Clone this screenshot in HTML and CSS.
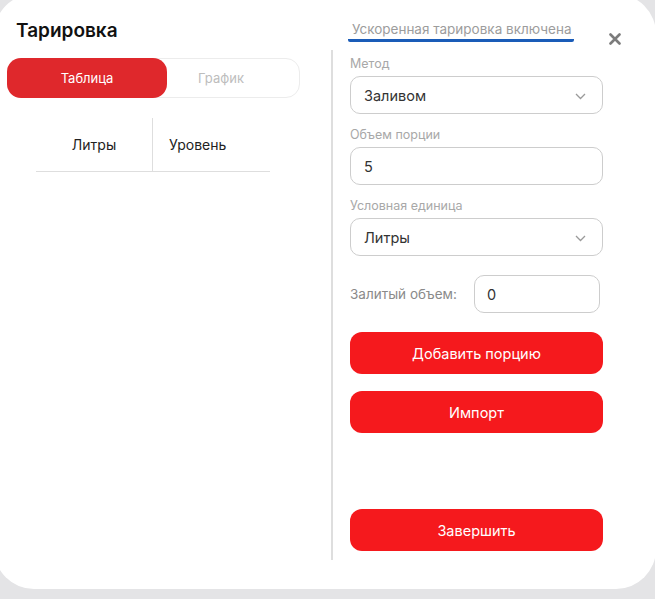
FILE: index.html
```html
<!DOCTYPE html>
<html lang="ru">
<head>
  <meta charset="UTF-8">
  <meta name="viewport" content="width=device-width, initial-scale=1.0">
  <title>Тарировка</title>
  <link rel="stylesheet" href="styles.css">
</head>
<body>
  <!-- Modal -->
  <div class="modal">
    <div class="modal-inner">

      <!-- Left: table / chart -->
      <section class="left-col">
        <h1 class="modal-title">Тарировка</h1>
        <div class="segment">
          <button class="segment-item active">Таблица</button>
          <button class="segment-item">График</button>
        </div>
        <div class="calib-table">
          <div class="calib-cell calib-cell-liters">Литры</div>
          <div class="calib-cell calib-cell-level">Уровень</div>
        </div>
      </section>

      <!-- Right: form -->
      <section class="right-col">
        <div class="right-head">
          <span class="fast-mode">Ускоренная тарировка включена</span>
          <button class="close-btn" aria-label="Закрыть">
            <svg width="12" height="12" viewBox="0 0 12 12">
              <path d="M1.5 1.5 L10.5 10.5 M10.5 1.5 L1.5 10.5" stroke="#7c7c7c" stroke-width="2.6" stroke-linecap="round"/>
            </svg>
          </button>
        </div>

        <div class="form">
          <div class="field-group">
            <label class="field-label">Метод</label>
            <div class="field select">
              <span>Заливом</span>
              <svg class="chevron" width="11" height="7" viewBox="0 0 11 7">
                <path d="M1 1 L5.5 5.5 L10 1" fill="none" stroke="#9a9a9a" stroke-width="1.3"/>
              </svg>
            </div>
          </div>

          <div class="field-group">
            <label class="field-label">Объем порции</label>
            <div class="field">
              <span>5</span>
            </div>
          </div>

          <div class="field-group">
            <label class="field-label">Условная единица</label>
            <div class="field select">
              <span>Литры</span>
              <svg class="chevron" width="11" height="7" viewBox="0 0 11 7">
                <path d="M1 1 L5.5 5.5 L10 1" fill="none" stroke="#9a9a9a" stroke-width="1.3"/>
              </svg>
            </div>
          </div>

          <div class="filled-row">
            <span class="filled-label">Залитый объем:</span>
            <div class="field field-small">
              <span>0</span>
            </div>
          </div>

          <button class="btn btn-add">Добавить порцию</button>
          <button class="btn btn-import">Импорт</button>
          <button class="btn btn-finish">Завершить</button>
        </div>
      </section>

    </div>
  </div>
</body>
</html>
```

FILE: styles.css
```css
/* General Reset */
* {
  margin: 0;
  padding: 0;
  box-sizing: border-box;
}

body {
  font-family: Inter, "Noto Sans", Arial, sans-serif;
  background-color: #e4e4e6;
  color: #222;
  overflow: hidden;
}

button {
  font-family: inherit;
  border: none;
  background: none;
  cursor: pointer;
}

/* Modal */
.modal {
  margin: -6px 0 0 -6px;
  width: 662px;
  height: 595px;
  background-color: #fff;
  border-radius: 40px;
  padding: 6px 0 0 6px;
}

.modal-inner {
  display: flex;
}

/* Left column */
.left-col {
  width: 331px;
  padding: 17px 0 0 7px;
}

.modal-title {
  margin-left: 9px;
  font-size: 19px;
  font-weight: 600;
  line-height: 28px;
  color: #111;
}

.segment {
  display: flex;
  width: 293px;
  height: 40px;
  margin-top: 13px;
  border: 1px solid #ececec;
  border-radius: 14px;
}

.segment-item {
  flex: 0 0 160px;
  margin: -1px 0 -1px -1px;
  font-size: 13px;
  color: #bdbdbd;
  border-radius: 14px;
}

.segment-item + .segment-item {
  flex: 1;
  margin: 0;
  padding-right: 24px;
}

.segment-item.active {
  background-color: #df282c;
  color: #fff;
}

.calib-table {
  display: flex;
  width: 234px;
  height: 54px;
  margin: 20px 0 0 29px;
  border-bottom: 1px solid #dedede;
}

.calib-cell {
  flex: 0 0 117px;
  display: flex;
  align-items: center;
  font-size: 14px;
  color: #222;
}

.calib-cell-liters {
  justify-content: center;
  border-right: 1px solid #dedede;
}

.calib-cell-level {
  padding-left: 16px;
}

/* Right column */
.right-col {
  width: 324px;
}

.right-head {
  display: flex;
  align-items: flex-start;
  justify-content: space-between;
  padding: 20px 34px 0 17px;
  height: 50px;
}

.fast-mode {
  display: inline-block;
  padding: 0 3px 1px 4px;
  font-size: 13.5px;
  line-height: 18px;
  white-space: nowrap;
  color: #9c9c9c;
  border-bottom: 3px solid #1a5cb8;
  border-radius: 2px;
}

.close-btn {
  display: flex;
  margin-top: 13px;
  width: 12px;
  height: 12px;
}

.form {
  display: flex;
  flex-direction: column;
  width: 272px;
  border-left: 2px solid #dedede;
  padding: 6px 0 9px 17px;
}

.field-group {
  display: flex;
  flex-direction: column;
  margin-bottom: 13px;
}

.field-label {
  font-size: 12.5px;
  line-height: 16px;
  color: #a8a8a8;
  margin-bottom: 4px;
}

.field {
  display: flex;
  align-items: center;
  justify-content: space-between;
  width: 253px;
  height: 38px;
  padding: 0 16px 0 13px;
  border: 1px solid #cdcdcd;
  border-radius: 10px;
  font-size: 14.5px;
  color: #333;
}

.select .chevron {
  margin-top: 2px;
}

.filled-row {
  display: flex;
  align-items: center;
  margin-top: 6px;
}

.filled-label {
  width: 124px;
  font-size: 13.5px;
  color: #8a8a8a;
}

.field-small {
  width: 126px;
  padding-left: 12px;
}

.btn {
  width: 253px;
  height: 42px;
  background-color: #f5191d;
  color: #fff;
  font-size: 14.5px;
  border-radius: 12px;
}

.btn-add {
  margin-top: 19px;
}

.btn-import {
  margin-top: 17px;
}

.btn-finish {
  margin-top: 76px;
}
```
